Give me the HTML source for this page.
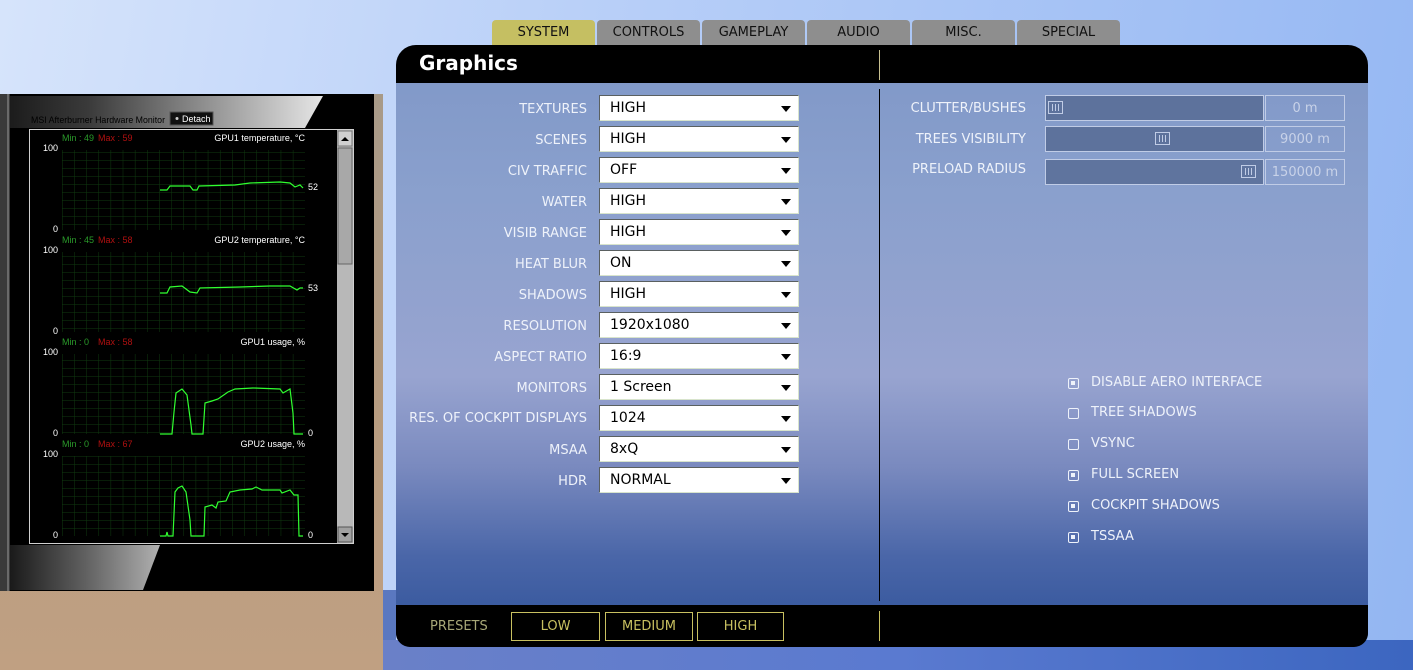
<!DOCTYPE html>
<html><head><meta charset="utf-8"><style>
*{margin:0;padding:0;box-sizing:border-box}
body{width:1413px;height:670px;overflow:hidden;position:relative;font-family:"DejaVu Sans","Liberation Sans",sans-serif;background:linear-gradient(100deg,#d6e4fb 0%,#b8cff8 40%,#93b6f2 100%)}
.abs{position:absolute}
.tab{position:absolute;top:20px;height:25px;width:103px;background:#8e8e8e;border-radius:4px 4px 0 0;text-align:center;font-size:13px;line-height:25px;color:#111}
.panel{position:absolute;left:396px;top:45px;width:972px;height:602px;border-radius:20px 20px 14px 14px;overflow:hidden;background:linear-gradient(180deg,#7f97c7 0%,#8aa0cd 25%,#98a4d0 55%,#7a8abf 70%,#4a66a8 85%,#2f5299 100%)}
.lbl{position:absolute;width:240px;text-align:right;font-size:13px;color:#eef2fa;white-space:nowrap}
.dd{position:absolute;left:203px;width:200px;height:26px;background:#fff;border:1px solid;border-color:#5a6060 #d8e4cc #d8e4cc #5a6060;font-size:14px;line-height:25px;padding-left:10px;color:#000}
.dd:after{content:"";position:absolute;right:7px;top:10px;border-left:5px solid transparent;border-right:5px solid transparent;border-top:6px solid #000}
.cb{position:absolute;left:672px;font-size:13px;color:#eef2fa}
.cb i{position:absolute;left:0;top:3px;width:11px;height:11px;border:1.5px solid #eef2fa;border-radius:2px}
.cb i.on:after{content:"";position:absolute;left:2px;top:2px;width:4px;height:4px;background:#eef2fa}
.cb span{position:absolute;left:23px;white-space:nowrap}
.pb{position:absolute;height:29px;border:1px solid #c8c060;color:#c8c060;font-size:13px;text-align:center;line-height:27px}
.sl{position:absolute;right:342px;font-size:13px;color:#eef2fa;white-space:nowrap}
</style></head><body>
<div class="abs" style="left:0;top:94px;width:383px;height:576px;background:linear-gradient(180deg,#a89a88 0%,#b89c80 60%,#c0a082 100%)"></div>
<div class="abs" style="left:383px;top:590px;width:13px;height:80px;background:#5a78c0"></div>
<div class="abs" style="left:383px;top:640px;width:1030px;height:30px;background:linear-gradient(90deg,#6a80c8,#5a7ad0 50%,#3c66c0)"></div>
<svg class="abs" style="left:0;top:94px" width="374" height="497" viewBox="0 94 374 497">
<defs>
<linearGradient id="hg" x1="0" x2="1"><stop offset="0" stop-color="#1c1c1c"/><stop offset="0.25" stop-color="#3a3a3a"/><stop offset="1" stop-color="#e6e6e6"/></linearGradient>
<linearGradient id="fg" x1="0" x2="1"><stop offset="0" stop-color="#1a1a1a"/><stop offset="0.5" stop-color="#606060"/><stop offset="1" stop-color="#b0b0b0"/></linearGradient>
<pattern id="grid" x="62" y="0" width="12.15" height="8" patternUnits="userSpaceOnUse"><path d="M0 0V8M0 0H12.15" stroke="#0f3a0f" stroke-width="1" fill="none"/></pattern>
</defs>
<rect x="0" y="94" width="374" height="497" fill="#000"/>
<rect x="0" y="94" width="10" height="497" fill="#3a3a3a"/>
<rect x="7" y="94" width="2" height="497" fill="#6a6a6a"/>
<path d="M10 96H323L305 128H10Z" fill="url(#hg)"/>
<path d="M10 545H160L143 590H10Z" fill="url(#fg)"/>
<text x="31" y="123" font-family="Liberation Sans" font-size="9.5" fill="#000" textLength="134" lengthAdjust="spacingAndGlyphs">MSI Afterburner Hardware Monitor</text>
<rect x="170" y="112" width="43" height="13" fill="#111" stroke="#555"/>
<circle cx="177" cy="118.5" r="1.5" fill="#ccc"/>
<text x="182" y="122" font-family="Liberation Sans" font-size="9" fill="#fff">Detach</text>
<rect x="29.5" y="129.5" width="324" height="414" fill="#000" stroke="#d0d0d0"/>
<rect x="337" y="130" width="16" height="413" fill="#b8b8b8"/>
<rect x="338" y="131" width="14" height="15" fill="#d0d0d0" stroke="#777"/>
<path d="M341 141h8l-4-4z" fill="#000"/>
<rect x="338" y="148" width="14" height="116" fill="#a8a8a8" stroke="#666"/>
<rect x="338" y="527" width="14" height="15" fill="#a0a0a0" stroke="#555"/>
<path d="M341 533h8l-4 4z" fill="#000"/>
<g font-family="Liberation Sans" font-size="9">
<rect x="62" y="150" width="243" height="80" fill="url(#grid)"/>
<text x="62" y="141" fill="#2a9a2a">Min : 49</text><text x="98" y="141" fill="#b01010">Max : 59</text>
<text x="305" y="141" fill="#fff" text-anchor="end">GPU1 temperature, °C</text>
<text x="58" y="151" fill="#fff" text-anchor="end">100</text><text x="58" y="232" fill="#fff" text-anchor="end">0</text>
<text x="308" y="190" fill="#fff">52</text>
<polyline fill="none" stroke="#30ff30" stroke-width="1.2" points="160,190 167,190 170,186 190,186 193,190 197,190 199,186 235,185 250,183 280,182 290,183 295,187 300,185 303,188"/>
<rect x="62" y="252" width="243" height="80" fill="url(#grid)"/>
<text x="62" y="243" fill="#2a9a2a">Min : 45</text><text x="98" y="243" fill="#b01010">Max : 58</text>
<text x="305" y="243" fill="#fff" text-anchor="end">GPU2 temperature, °C</text>
<text x="58" y="253" fill="#fff" text-anchor="end">100</text><text x="58" y="334" fill="#fff" text-anchor="end">0</text>
<text x="308" y="291" fill="#fff">53</text>
<polyline fill="none" stroke="#30ff30" stroke-width="1.2" points="160,293 167,293 170,287 182,286 190,292 197,293 200,288 240,287 270,286 290,286 297,290 300,288 303,288"/>
<rect x="62" y="354" width="243" height="80" fill="url(#grid)"/>
<text x="62" y="345" fill="#2a9a2a">Min : 0</text><text x="98" y="345" fill="#b01010">Max : 58</text>
<text x="305" y="345" fill="#fff" text-anchor="end">GPU1 usage, %</text>
<text x="58" y="355" fill="#fff" text-anchor="end">100</text><text x="58" y="436" fill="#fff" text-anchor="end">0</text>
<text x="308" y="436" fill="#fff">0</text>
<polyline fill="none" stroke="#30ff30" stroke-width="1.2" points="160,434 172,434 174,412 176,393 182,389 187,395 191,425 192,434 203,434 205,403 212,401 218,399 228,392 235,389 253,388 280,389 283,393 290,389 293,413 294,434 303,434"/>
<rect x="62" y="456" width="243" height="80" fill="url(#grid)"/>
<text x="62" y="447" fill="#2a9a2a">Min : 0</text><text x="98" y="447" fill="#b01010">Max : 67</text>
<text x="305" y="447" fill="#fff" text-anchor="end">GPU2 usage, %</text>
<text x="58" y="457" fill="#fff" text-anchor="end">100</text><text x="58" y="538" fill="#fff" text-anchor="end">0</text>
<text x="308" y="538" fill="#fff">0</text>
<polyline fill="none" stroke="#30ff30" stroke-width="1.2" points="160,536 166,536 167,532 168,536 173,536 175,492 178,488 182,486 186,492 190,520 191,536 204,536 205,507 212,505 216,508 218,502 226,501 230,492 240,490 252,489 256,487 262,490 280,490 282,493 290,490 294,495 298,495 299,536 303,536"/>
</g>
</svg>
<div class="tab" style="left:492px;background:#c5bf62">SYSTEM</div>
<div class="tab" style="left:597px">CONTROLS</div>
<div class="tab" style="left:702px">GAMEPLAY</div>
<div class="tab" style="left:807px">AUDIO</div>
<div class="tab" style="left:912px">MISC.</div>
<div class="tab" style="left:1017px">SPECIAL</div>
<div class="panel">
<div class="abs" style="left:0;top:0;width:972px;height:38px;background:#000"></div>
<div class="abs" style="left:23px;top:6px;font-size:20px;font-weight:bold;color:#fff">Graphics</div>
<div class="abs" style="left:483px;top:5px;width:1px;height:30px;background:#c8c090"></div>
<div class="abs" style="left:483px;top:44px;width:1px;height:512px;background:#000"></div>
<div class="abs" style="left:0;top:560px;width:972px;height:42px;background:#000"></div>
<div class="abs" style="left:483px;top:566px;width:1px;height:30px;background:#c8c060"></div>
<div class="abs" style="left:34px;top:574px;font-size:13px;color:#a8a878">PRESETS</div>
<div class="pb" style="left:115px;top:567px;width:89px">LOW</div>
<div class="pb" style="left:209px;top:567px;width:88px">MEDIUM</div>
<div class="pb" style="left:301px;top:567px;width:87px">HIGH</div>
<div class="abs" style="left:0;top:51px;width:420px;height:400px">
<div class="lbl" style="top:6px;left:-49px">TEXTURES</div><div class="dd" style="top:-1px">HIGH</div>
<div class="lbl" style="top:37px;left:-49px">SCENES</div><div class="dd" style="top:30px">HIGH</div>
<div class="lbl" style="top:68px;left:-49px">CIV TRAFFIC</div><div class="dd" style="top:61px">OFF</div>
<div class="lbl" style="top:99px;left:-49px">WATER</div><div class="dd" style="top:92px">HIGH</div>
<div class="lbl" style="top:130px;left:-49px">VISIB RANGE</div><div class="dd" style="top:123px">HIGH</div>
<div class="lbl" style="top:161px;left:-49px">HEAT BLUR</div><div class="dd" style="top:154px">ON</div>
<div class="lbl" style="top:192px;left:-49px">SHADOWS</div><div class="dd" style="top:185px">HIGH</div>
<div class="lbl" style="top:223px;left:-49px">RESOLUTION</div><div class="dd" style="top:216px">1920x1080</div>
<div class="lbl" style="top:254px;left:-49px">ASPECT RATIO</div><div class="dd" style="top:247px">16:9</div>
<div class="lbl" style="top:285px;left:-49px">MONITORS</div><div class="dd" style="top:278px">1 Screen</div>
<div class="lbl" style="top:315px;left:-49px">RES. OF COCKPIT DISPLAYS</div><div class="dd" style="top:309px">1024</div>
<div class="lbl" style="top:347px;left:-49px">MSAA</div><div class="dd" style="top:340px">8xQ</div>
<div class="lbl" style="top:378px;left:-49px">HDR</div><div class="dd" style="top:371px">NORMAL</div>
</div>
<div class="sl" style="top:56px">CLUTTER/BUSHES</div>
<div class="sl" style="top:87px">TREES VISIBILITY</div>
<div class="sl" style="top:117px">PRELOAD RADIUS</div>
<div class="abs" style="left:649px;top:50px;width:219px;height:26px;background:#5d729c;border:1px solid #c0cce6"><div class="abs" style="left:2px;top:5px;width:15px;height:13px;border:1px solid #c0cce6;background:repeating-linear-gradient(90deg,#c0cce6 0 1px,transparent 1px 3px);background-clip:content-box;padding:2px 3px"></div></div>
<div class="abs" style="left:649px;top:81px;width:219px;height:26px;background:#5d729c;border:1px solid #c0cce6"><div class="abs" style="left:109px;top:5px;width:15px;height:13px;border:1px solid #c0cce6;background:repeating-linear-gradient(90deg,#c0cce6 0 1px,transparent 1px 3px);background-clip:content-box;padding:2px 3px"></div></div>
<div class="abs" style="left:649px;top:114px;width:219px;height:26px;background:#5f749e;border:1px solid #c0cce6"><div class="abs" style="left:195px;top:5px;width:15px;height:13px;border:1px solid #c0cce6;background:repeating-linear-gradient(90deg,#c0cce6 0 1px,transparent 1px 3px);background-clip:content-box;padding:2px 3px"></div></div>
<div class="abs" style="left:869px;top:50px;width:80px;height:26px;border:1px solid #c0cce6;color:#c8d2e8;font-size:13px;text-align:center;line-height:25px">0 m</div>
<div class="abs" style="left:869px;top:81px;width:80px;height:26px;border:1px solid #c0cce6;color:#c8d2e8;font-size:13px;text-align:center;line-height:25px">9000 m</div>
<div class="abs" style="left:869px;top:114px;width:80px;height:26px;border:1px solid #c0cce6;color:#c8d2e8;font-size:13px;text-align:center;line-height:25px">150000 m</div>
<div class="cb" style="top:330px"><i class="on"></i><span>DISABLE AERO INTERFACE</span></div>
<div class="cb" style="top:360px"><i></i><span>TREE SHADOWS</span></div>
<div class="cb" style="top:391px"><i></i><span>VSYNC</span></div>
<div class="cb" style="top:422px"><i class="on"></i><span>FULL SCREEN</span></div>
<div class="cb" style="top:453px"><i class="on"></i><span>COCKPIT SHADOWS</span></div>
<div class="cb" style="top:484px"><i class="on"></i><span>TSSAA</span></div>
</div>
</body></html>
